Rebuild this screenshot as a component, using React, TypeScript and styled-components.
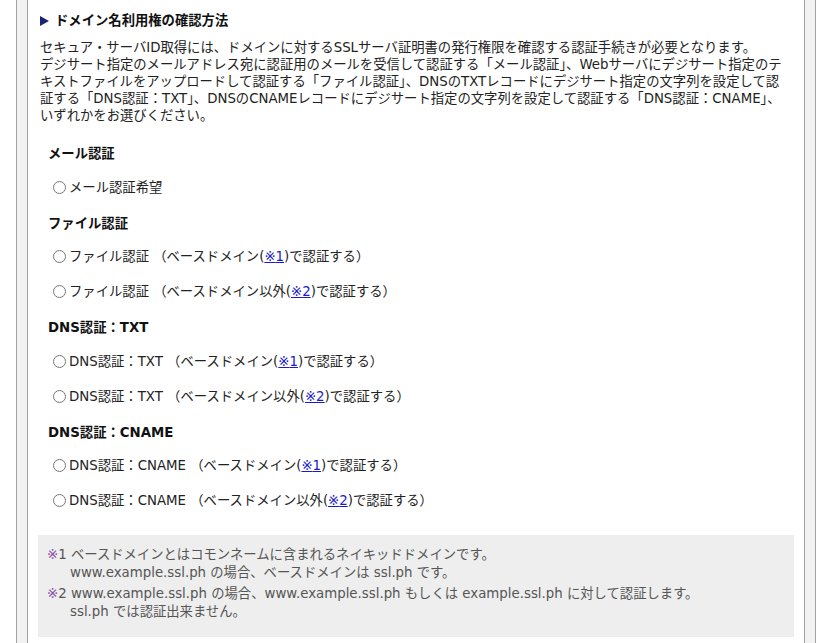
import React from 'react'
import styled, { createGlobalStyle } from 'styled-components'

const GlobalStyle = createGlobalStyle`
  html, body {
    margin: 0;
    padding: 0;
    background: #ffffff;
  }
  body {
    font-family: "DejaVu Sans", "Noto Sans CJK JP", sans-serif;
    font-size: 13.33px;
    color: #222222;
  }
`

const Page = styled.div`
  padding: 0 14px 0 16px;
  min-height: 643px;
  box-sizing: border-box;
  display: flex;
`

const Frame = styled.div`
  flex: 1;
  display: flex;
  background: #f2f2f2;
  border-left: 1px solid #a3a3a3;
  border-right: 1px solid #a3a3a3;
  padding: 0 10px;
`

const Panel = styled.div`
  flex: 1;
  background: #ffffff;
  border-left: 1px solid #a3a3a3;
  border-right: 1px solid #a3a3a3;
  padding: 12px 10px 0 10px;
`

const Heading = styled.h3`
  display: flex;
  align-items: center;
  margin: 0;
  padding-left: 2px;
  font-size: 13.33px;
  line-height: 17px;
  font-weight: bold;
  color: #111111;

  &::before {
    content: '';
    width: 0;
    height: 0;
    border-left: 9px solid #1b2377;
    border-top: 5px solid transparent;
    border-bottom: 5px solid transparent;
    margin-right: 6px;
  }
`

const Lead = styled.p`
  margin: 10px 0 0 0;
  padding: 0 0 0 2px;
  line-height: 17px;
  white-space: nowrap;
`

const Options = styled.div`
  padding: 4px 0 0 10px;
`

const Group = styled.div`
  margin-top: 19px;

  &:first-child {
    margin-top: 17px;
  }
`

const GroupTitle = styled.div`
  font-weight: bold;
  line-height: 17px;
  color: #111111;
`

const OptionRow = styled.label<{ $first?: boolean }>`
  display: flex;
  align-items: center;
  margin-top: ${(p) => (p.$first ? '16.5px' : '18px')};
  line-height: 17px;
  color: #222222;

  input {
    width: 13px;
    height: 13px;
    margin: 0 3px 0 5px;
  }
`

const Ref = styled.a`
  color: #1a1acc;
  text-decoration: underline;
`

const NoteBox = styled.div`
  margin-top: 26px;
  background: #eeeeee;
  padding: 11px 10px 16px 9px;
  color: #555555;
  line-height: 18px;
`

const NoteItem = styled.p`
  margin: 0;
  padding-left: 23px;
  text-indent: -23px;

  & + & {
    margin-top: 3px;
  }
`

const Mark = styled.span`
  color: #8a4fa8;
`

type Option = { label: string; note?: 1 | 2 }
type GroupData = { title: string; options: Option[] }

const groups: GroupData[] = [
  { title: 'メール認証', options: [{ label: 'メール認証希望' }] },
  {
    title: 'ファイル認証',
    options: [
      { label: 'ファイル認証', note: 1 },
      { label: 'ファイル認証', note: 2 },
    ],
  },
  {
    title: 'DNS認証：TXT',
    options: [
      { label: 'DNS認証：TXT', note: 1 },
      { label: 'DNS認証：TXT', note: 2 },
    ],
  },
  {
    title: 'DNS認証：CNAME',
    options: [
      { label: 'DNS認証：CNAME', note: 1 },
      { label: 'DNS認証：CNAME', note: 2 },
    ],
  },
]

const OptionLabel: React.FC<{ option: Option }> = ({ option }) => {
  if (!option.note) return <span>{option.label}</span>
  const scope = option.note === 1 ? 'ベースドメイン' : 'ベースドメイン以外'
  return (
    <span>
      {option.label} （{scope}(<Ref href="#">※{option.note}</Ref>)で認証する）
    </span>
  )
}

export default function App() {
  return (
    <>
      <GlobalStyle />
      <Page>
        <Frame>
          <Panel>
            <Heading>ドメイン名利用権の確認方法</Heading>
            <Lead>
              セキュア・サーバID取得には、ドメインに対するSSLサーバ証明書の発行権限を確認する認証手続きが必要となります。
              <br />
              デジサート指定のメールアドレス宛に認証用のメールを受信して認証する「メール認証」、Webサーバにデジサート指定のテ
              <br />
              キストファイルをアップロードして認証する「ファイル認証」、DNSのTXTレコードにデジサート指定の文字列を設定して認
              <br />
              証する「DNS認証：TXT」、DNSのCNAMEレコードにデジサート指定の文字列を設定して認証する「DNS認証：CNAME」、
              <br />
              いずれかをお選びください。
            </Lead>
            <Options>
              {groups.map((g) => (
                <Group key={g.title}>
                  <GroupTitle>{g.title}</GroupTitle>
                  {g.options.map((o, i) => (
                    <OptionRow key={i} $first={i === 0}>
                      <input type="radio" name="auth" />
                      <OptionLabel option={o} />
                    </OptionRow>
                  ))}
                </Group>
              ))}
            </Options>
            <NoteBox>
              <NoteItem>
                <Mark>※</Mark>1 ベースドメインとはコモンネームに含まれるネイキッドドメインです。
                <br />
                www.example.ssl.ph の場合、ベースドメインは ssl.ph です。
              </NoteItem>
              <NoteItem>
                <Mark>※</Mark>2 www.example.ssl.ph の場合、www.example.ssl.ph もしくは example.ssl.ph に対して認証します。
                <br />
                ssl.ph では認証出来ません。
              </NoteItem>
            </NoteBox>
          </Panel>
        </Frame>
      </Page>
    </>
  )
}
